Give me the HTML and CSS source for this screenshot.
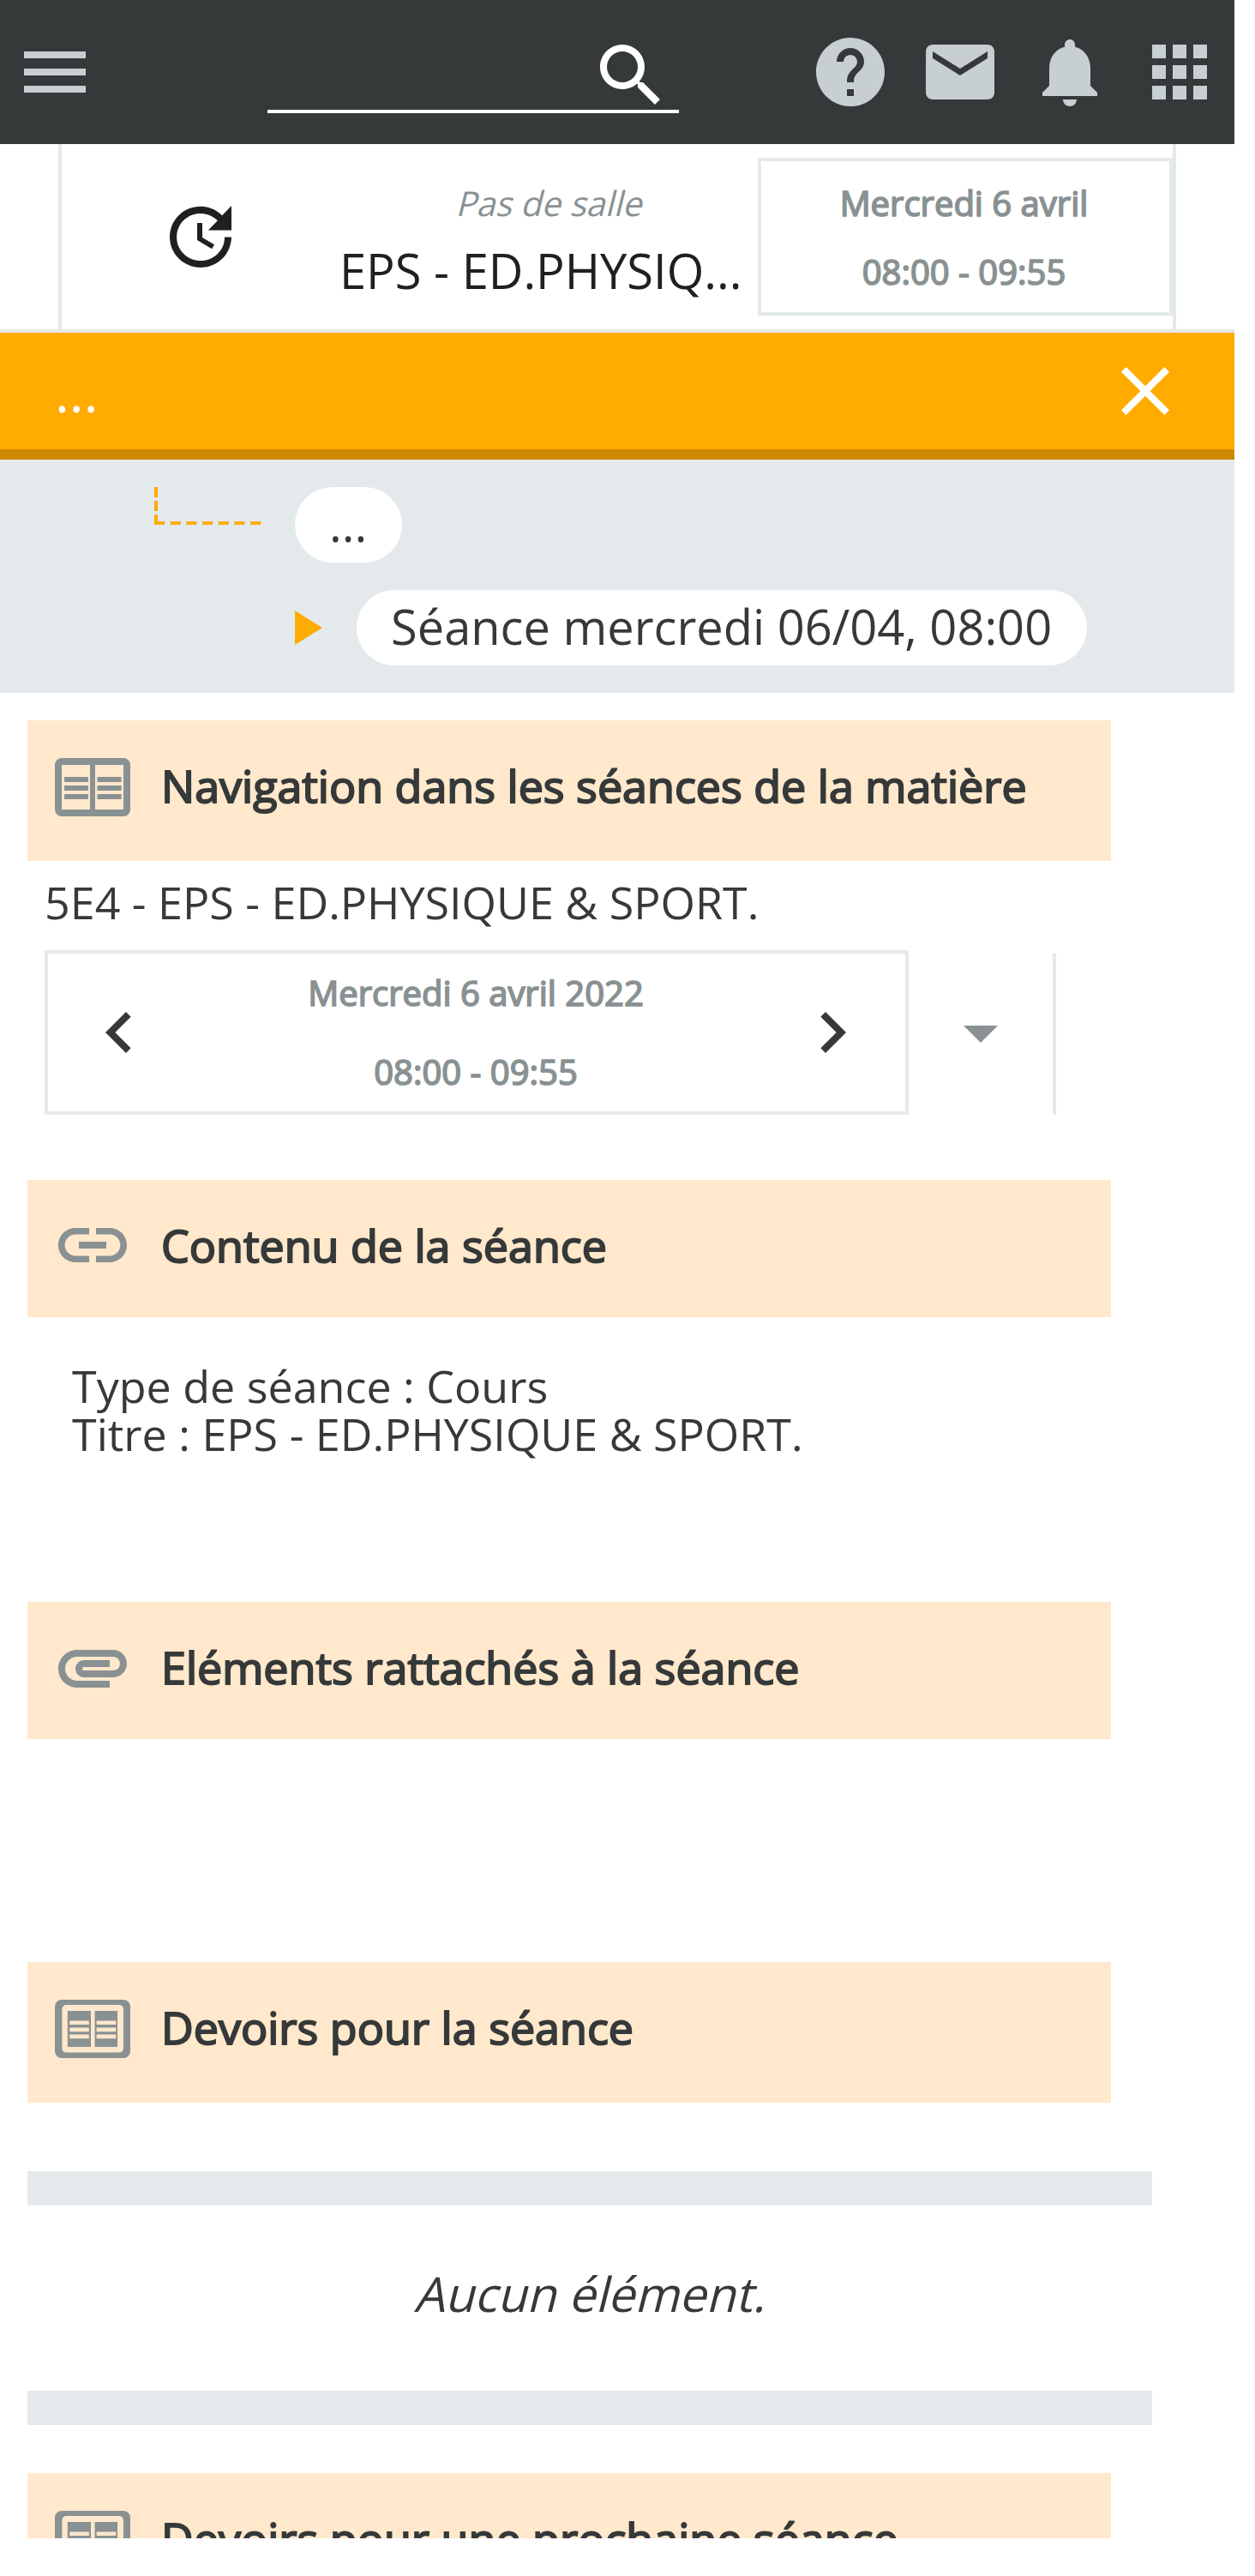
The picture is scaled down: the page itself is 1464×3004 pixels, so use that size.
FILE: index.html
```html
<!DOCTYPE html>
<html lang="fr">
<head>
    <meta charset="UTF-8">
    <meta name="viewport" content="width=device-width, initial-scale=1.0">
    <title>Cahier de textes - Séance</title>
    <link rel="stylesheet" href="styles.css">
</head>
<body>
    <div class="page">
        <!-- Barre du haut -->
        <header class="topbar">
            <svg class="icon" viewBox="0 0 24 24"><path d="M3 18h18v-2H3v2zm0-5h18v-2H3v2zm0-7v2h18V6H3z"/></svg>
            <div class="search">
                <svg class="icon" viewBox="0 0 24 24"><path d="M15.5 14h-.79l-.28-.27C15.41 12.59 16 11.11 16 9.5 16 5.91 13.09 3 9.5 3S3 5.91 3 9.5 5.91 16 9.5 16c1.61 0 3.09-.59 4.23-1.57l.27.28v.79l5 4.99L20.49 19l-4.99-5zm-6 0C7.01 14 5 11.99 5 9.5S7.01 5 9.5 5 14 7.01 14 9.5 11.99 14 9.5 14z"/></svg>
            </div>
            <nav class="actions">
                <svg class="icon" viewBox="0 0 24 24"><path d="M12 2C6.48 2 2 6.48 2 12s4.48 10 10 10 10-4.48 10-10S17.52 2 12 2zm1 17h-2v-2h2v2zm2.07-7.75l-.9.92C13.45 12.9 13 13.5 13 15h-2v-.5c0-1.1.45-2.1 1.17-2.83l1.24-1.26c.37-.36.59-.86.59-1.41 0-1.1-.9-2-2-2s-2 .9-2 2H8c0-2.21 1.79-4 4-4s4 1.79 4 4c0 .88-.36 1.68-.93 2.25z"/></svg>
                <svg class="icon" viewBox="0 0 24 24"><path d="M20 4H4c-1.1 0-1.99.9-1.99 2L2 18c0 1.1.9 2 2 2h16c1.1 0 2-.9 2-2V6c0-1.1-.9-2-2-2zm0 4l-8 5-8-5V6l8 5 8-5v2z"/></svg>
                <svg class="icon" viewBox="0 0 24 24"><path d="M12 22c1.1 0 2-.9 2-2h-4c0 1.1.89 2 2 2zm6-6v-5c0-3.07-1.64-5.64-4.5-6.32V4c0-.83-.67-1.5-1.5-1.5s-1.5.67-1.5 1.5v.68C7.63 5.36 6 7.92 6 11v5l-2 2v1h16v-1l-2-2z"/></svg>
                <svg class="icon" viewBox="0 0 24 24"><path d="M4 8h4V4H4v4zm6 12h4v-4h-4v4zm-6 0h4v-4H4v4zm0-6h4v-4H4v4zm6 0h4v-4h-4v4zm6-10v4h4V4h-4zm-6 4h4V4h-4v4zm6 6h4v-4h-4v4zm0 6h4v-4h-4v4z"/></svg>
            </nav>
        </header>

        <!-- Cours sélectionné -->
        <div class="course-row">
            <div class="course">
                <svg class="icon" viewBox="0 0 24 24"><path d="M21 10.12h-6.78l2.74-2.82c-2.73-2.7-7.15-2.8-9.88-.1-2.73 2.71-2.73 7.08 0 9.79s7.15 2.71 9.88 0C18.32 15.65 19 14.08 19 12.1h2c0 1.98-.88 4.55-2.64 6.29-3.51 3.48-9.21 3.48-12.72 0-3.5-3.47-3.53-9.11-.02-12.58s9.14-3.47 12.65 0L21 3v7.12zM12.5 8v4.25l3.5 2.08-.72 1.21L11 13V8h1.5z"/></svg>
                <div class="course-text">
                    <div class="room"><span class="slanted">Pas de salle</span></div>
                    <div class="course-name">EPS - ED.PHYSIQ...</div>
                </div>
                <div class="course-date">
                    <div>Mercredi 6 avril</div>
                    <div>08:00 - 09:55</div>
                </div>
            </div>
        </div>

        <div class="panel-head">
            <span>...</span>
            <svg class="icon" viewBox="0 0 24 24"><path d="M19 6.41L17.59 5 12 10.59 6.41 5 5 6.41 10.59 12 5 17.59 6.41 19 12 13.41 17.59 19 19 17.59 13.41 12z"/></svg>
        </div>

        <!-- Fil d'ariane -->
        <div class="tree">
            <div class="tree-row">
                <svg class="branch" viewBox="0 0 124 44"><path d="M2 0V42" stroke-dasharray="12 4"/><path d="M0 42H124" stroke-dasharray="12 6.67"/></svg>
                <span class="pill">...</span>
            </div>
            <div class="tree-row">
                <span class="arrow"></span>
                <span class="pill">Séance mercredi 06/04, 08:00</span>
            </div>
        </div>

        <section class="block navigation">
            <h2 class="title">
                <svg class="icon" viewBox="0 0 24 24"><path fill-rule="evenodd" d="M3 4h18a2 2 0 0 1 2 2v13a2 2 0 0 1-2 2H3a2 2 0 0 1-2-2V6a2 2 0 0 1 2-2zm0 2v13h8.25V6zm9.75 0v13H21V6z"/><path d="M3.75 9.5h7V11h-7zm0 2.5h7v1.5h-7zm0 2.5h7V16h-7zm9.6-5h7.05V11h-7.05zm0 2.5h7.05v1.5h-7.05zm0 2.5h7.05V16h-7.05z"/></svg>
                <span>Navigation dans les séances de la matière</span>
            </h2>
            <p class="subject">5E4 - EPS - ED.PHYSIQUE &amp; SPORT.</p>
            <div class="picker">
                <div class="picker-box">
                    <svg class="icon" viewBox="0 0 24 24"><path d="M15.41 7.41L14 6l-6 6 6 6 1.41-1.41L10.83 12z"/></svg>
                    <div class="picker-date">
                        <div>Mercredi 6 avril 2022</div>
                        <div>08:00 - 09:55</div>
                    </div>
                    <svg class="icon" viewBox="0 0 24 24"><path d="M10 6L8.59 7.41 13.17 12l-4.58 4.59L10 18l6-6z"/></svg>
                </div>
                <div class="picker-more">
                    <svg class="icon" viewBox="0 0 24 24"><path d="M7 10l5 5 5-5z"/></svg>
                </div>
            </div>
        </section>

        <section class="block content">
            <h2 class="title">
                <svg class="icon" viewBox="0 0 24 24"><path d="M3.9 12c0-1.71 1.39-3.1 3.1-3.1h4V7H7c-2.76 0-5 2.24-5 5s2.24 5 5 5h4v-1.9H7c-1.71 0-3.1-1.39-3.1-3.1zM8 13h8v-2H8v2zm9-6h-4v1.9h4c1.71 0 3.1 1.39 3.1 3.1s-1.39 3.1-3.1 3.1h-4V17h4c2.76 0 5-2.24 5-5s-2.24-5-5-5z"/></svg>
                <span>Contenu de la séance</span>
            </h2>
            <p class="details">Type de séance : Cours<br>Titre : EPS - ED.PHYSIQUE &amp; SPORT.</p>
        </section>

        <section class="block attachments">
            <h2 class="title">
                <svg class="icon" viewBox="0 0 24 24"><path d="M2 12.5C2 9.46 4.46 7 7.5 7H18c2.21 0 4 1.79 4 4s-1.79 4-4 4H9.5C8.12 15 7 13.88 7 12.5S8.12 10 9.5 10H17v2H9.41c-.55 0-.55 1 0 1H18c1.1 0 2-.9 2-2s-.9-2-2-2H7.5C5.57 9 4 10.57 4 12.5S5.57 16 7.5 16H17v2H7.5C4.46 18 2 15.54 2 12.5z"/></svg>
                <span>Eléments rattachés à la séance</span>
            </h2>
        </section>

        <section class="block homework">
            <h2 class="title">
                <svg class="icon" viewBox="0 0 24 24"><path fill-rule="evenodd" d="M3 4h18a2 2 0 0 1 2 2v13a2 2 0 0 1-2 2H3a2 2 0 0 1-2-2V6a2 2 0 0 1 2-2zm1.3 1.5a1.2 1.2 0 0 0-1.2 1.2v11.5a1.2 1.2 0 0 0 1.2 1.2h15.5a1.2 1.2 0 0 0 1.2-1.2V6.7a1.2 1.2 0 0 0-1.2-1.2z"/><path fill-rule="evenodd" d="M4.7 7.25h6.8v10.5H4.7zm.6 2.85v1.15h5.65V10.1zm0 2.05v1.15h5.65v-1.15zm0 2v1.15h5.65v-1.15zM12.65 7.25h6.6v10.5h-6.6zm.5 2.85v1.15h5.65V10.1zm0 2.05v1.15h5.65v-1.15zm0 2v1.15h5.65v-1.15z"/></svg>
                <span>Devoirs pour la séance</span>
            </h2>
            <p class="empty"><span class="slanted">Aucun élément.</span></p>
        </section>

        <section class="block">
            <h2 class="title">
                <svg class="icon" viewBox="0 0 24 24"><path fill-rule="evenodd" d="M3 4h18a2 2 0 0 1 2 2v13a2 2 0 0 1-2 2H3a2 2 0 0 1-2-2V6a2 2 0 0 1 2-2zm1.3 1.5a1.2 1.2 0 0 0-1.2 1.2v11.5a1.2 1.2 0 0 0 1.2 1.2h15.5a1.2 1.2 0 0 0 1.2-1.2V6.7a1.2 1.2 0 0 0-1.2-1.2z"/><path fill-rule="evenodd" d="M4.7 7.25h6.8v10.5H4.7zm.6 2.85v1.15h5.65V10.1zm0 2.05v1.15h5.65v-1.15zm0 2v1.15h5.65v-1.15zM12.65 7.25h6.6v10.5h-6.6zm.5 2.85v1.15h5.65V10.1zm0 2.05v1.15h5.65v-1.15zm0 2v1.15h5.65v-1.15z"/></svg>
                <span>Devoirs pour une prochaine séance</span>
            </h2>
        </section>
    </div>
</body>
</html>
```
FILE: styles.css
```css
* {
    box-sizing: border-box;
}
body {
    margin: 0;
    font-family: "Open Sans", "Noto Sans", sans-serif;
    font-size: 52px;
    color: #363939;
    background-color: white;
}
h2, p {
    margin: 0;
}
.page {
    width: 1440px;
    height: 2960px;
    overflow: hidden;
}
.icon {
    display: block;
    flex: none;
    width: 96px;
    height: 96px;
    fill: currentColor;
}
/* inclinaison autour de la ligne de base */
.slanted {
    display: inline-block;
    transform: skewX(-14deg);
    transform-origin: 0 calc(50% + 0.388em);
}

/* Barre du haut */
.topbar {
    display: flex;
    align-items: center;
    height: 168px;
    padding: 0 16px;
    color: #c8cfd2;
    background-color: #363939;
}
.search {
    display: flex;
    justify-content: flex-end;
    width: 480px;
    height: 92px;
    margin: 4px 0 0 200px;
    padding-right: 8px;
    color: white;
    border-bottom: 4px solid white;
}
.actions {
    display: flex;
    gap: 32px;
    margin-left: auto;
}

/* Cours */
.course-row {
    height: 220px;
    padding: 0 68px;
    border-bottom: 4px solid #e4e9eb;
}
.course {
    display: flex;
    align-items: center;
    height: 216px;
    padding-left: 114px;
    color: #202020;
    border-left: 4px solid #e4e9eb;
    border-right: 4px solid #e4e9eb;
}
.course-text {
    width: 488px;
    margin: 0 0 3px 114px;
}
.room {
    font-size: 40px;
    line-height: 80px;
    text-align: center;
    color: #899193;
}
.course-name {
    font-size: 56px;
    line-height: 76px;
    white-space: nowrap;
}
.course-date {
    width: 484px;
    height: 184px;
    padding: 9px 3px 0 0;
    border: 4px solid #e4e9eb;
}
.course-date, .picker-date {
    font-size: 40px;
    line-height: 80px;
    text-align: center;
    color: #899193;
    -webkit-text-stroke: 1.7px #899193;
}

/* Bandeau orange */
.panel-head {
    display: flex;
    align-items: center;
    justify-content: space-between;
    height: 148px;
    padding: 0 56px 0 64px;
    font-size: 64px;
    color: white;
    background-color: #ffab00;
    border-bottom: 12px solid #cc8800;
}

/* Fil d'ariane */
.tree {
    display: flex;
    flex-direction: column;
    gap: 32px;
    height: 272px;
    padding-top: 32px;
    background-color: #e4eaec;
}
.tree-row {
    display: flex;
    height: 88px;
}
.branch {
    width: 124px;
    height: 44px;
    margin: 0 40px 0 180px;
    fill: none;
    stroke: #ffab00;
    stroke-width: 4;
}
.arrow {
    margin: 24px 40px 0 344px;
    border-left: 32px solid #ffab00;
    border-top: 20px solid transparent;
    border-bottom: 20px solid transparent;
    height: 0;
}
.pill {
    padding: 0 41px 0 40px;
    font-size: 56px;
    line-height: 85px;
    background-color: white;
    border-radius: 44px;
}

/* Sections */
.block {
    margin-left: 32px;
}
.title {
    display: flex;
    gap: 32px;
    width: 1264px;
    height: 160px;
    padding: 28px;
    font-size: 52px;
    font-weight: normal;
    line-height: 96px;
    color: #363939;
    background-color: #ffe8cc;
    -webkit-text-stroke: 2px #363939;
}
.title .icon {
    color: #899193;
}
.title span {
    white-space: nowrap;
}
.navigation {
    height: 568px;
    padding-top: 32px;
}
.navigation .title, .homework .title {
    height: 164px;
}
.subject {
    padding: 0 20px;
    line-height: 96px;
}
.picker {
    display: flex;
    margin: 8px 0 0 20px;
}
.picker-box {
    display: flex;
    align-items: center;
    width: 1008px;
    height: 192px;
    padding: 0 37px 0 35px;
    border: 4px solid #e4e9ea;
}
.picker-date {
    flex: 1;
    margin-bottom: 1px;
    line-height: 92px;
}
.picker-more {
    width: 172px;
    height: 188px;
    margin-top: 4px;
    padding: 44px 0 0 36px;
    color: #899193;
    border-right: 4px solid #e4e9ea;
}
.content {
    height: 492px;
}
.details {
    padding: 52px;
    line-height: 56px;
}
.attachments {
    height: 420px;
}
.homework {
    height: 596px;
}
.empty {
    width: 1312px;
    height: 296px;
    margin-top: 80px;
    font-size: 56px;
    line-height: 205px;
    text-align: center;
    border-top: 40px solid #e4eaec;
    border-bottom: 40px solid #e4eaec;
}
```
